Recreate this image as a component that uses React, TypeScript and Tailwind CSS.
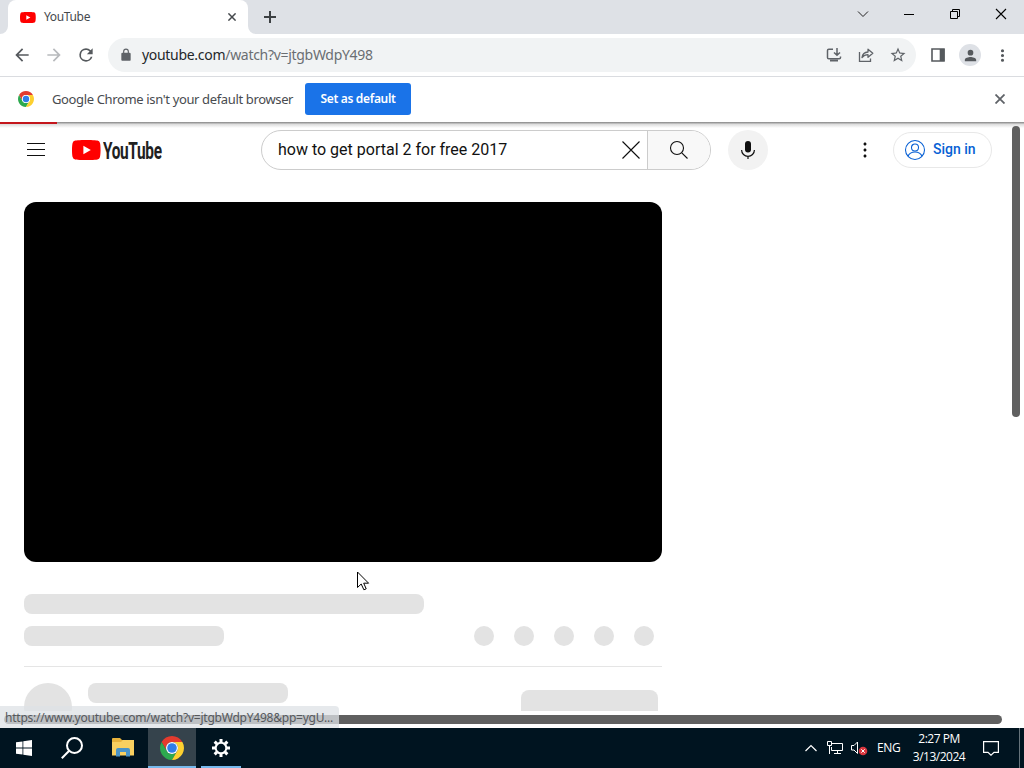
import type { ReactNode } from "react";

const TASKBAR_FONT = "font-['Open_Sans','Noto_Sans',sans-serif]";
const ACTION_DOTS = [0, 1, 2, 3, 4];

function ChromeLogo({ className }: { className: string }) {
  return (
    <svg viewBox="0 0 24 24" className={className}>
      <path fill="#e33b2e" d="M12 6H22.39A12 12 0 0 0 1.61 6L6.8 15A6 6 0 0 1 12 6Z" />
      <path fill="#2da94f" d="M6.8 15L1.61 6A12 12 0 0 0 12 24L17.2 15A6 6 0 0 1 6.8 15Z" />
      <path fill="#fdd030" d="M17.2 15L12 24A12 12 0 0 0 22.39 6H12A6 6 0 0 1 17.2 15Z" />
      <circle cx="12" cy="12" r="6" fill="#fff" />
      <circle cx="12" cy="12" r="4.8" fill="#2f7de9" />
    </svg>
  );
}

function PlayBadge({ className }: { className: string }) {
  return (
    <svg viewBox="0 0 29 20" className={className}>
      <path
        fill="#f00"
        d="M28 3.1A3.6 3.6 0 0 0 25.400 .6C23.200 0 14.300 0 14.300 0S5.400 0 3.200 .6A3.600 3.600 0 0 0 .6 3.100C0 5.400 0 10 0 10s0 4.600 .6 6.900A3.600 3.600 0 0 0 3.200 19.400C5.400 20 14.300 20 14.300 20s8.900 0 11.100-.6A3.600 3.600 0 0 0 28 16.900C28.600 14.600 28.600 10 28.600 10s0-4.600-.6-6.900Z"
      />
      <path fill="#fff" d="M11.400 14.300 18.800 10 11.400 5.700Z" />
    </svg>
  );
}

// Material glyph on the usual 24px grid
function Glyph({ d, className }: { d: string; className: string }) {
  return (
    <svg viewBox="0 0 24 24" fill="currentColor" className={`shrink-0 ${className}`}>
      <path d={d} />
    </svg>
  );
}

function TabStrip() {
  return (
    <div className="flex h-[34px] bg-[#dee1e6] pl-2">
      <div className="relative flex h-[34px] w-60 items-center rounded-t-lg bg-white pl-3">
        <svg viewBox="0 0 8 8" className="absolute -left-2 bottom-0 size-2">
          <path d="M8 0V8H0A8 8 0 0 0 8 0Z" fill="#fff" />
        </svg>
        <svg viewBox="0 0 8 8" className="absolute -right-2 bottom-0 size-2">
          <path d="M0 0V8H8A8 8 0 0 1 0 0Z" fill="#fff" />
        </svg>
        <PlayBadge className="h-[11px] w-4" />
        <span className="ml-2 text-[12px] leading-4 tracking-[-0.35px] text-[#45494d]">YouTube</span>
        <svg viewBox="0 0 8 8" className="ml-auto mr-3 size-2" stroke="#45494d" strokeWidth="1.5">
          <path d="M.4 .4 7.600 7.600M7.600 .4 .4 7.600" />
        </svg>
      </div>
      <svg viewBox="0 0 12 12" className="ml-4 mt-[11px] size-3" stroke="#3c4043" strokeWidth="2">
        <path d="M6 0V12M0 6H12" />
      </svg>
      <div className="ml-auto flex h-7 items-center pr-[17px]">
        <svg viewBox="0 0 12 12" className="mr-[34px] size-3" fill="none" stroke="#222">
          <path d="M1 3.500 6 8.500 11 3.500" />
        </svg>
        <svg viewBox="0 0 12 12" className="mr-[34px] size-3" stroke="#000">
          <path d="M1 6.500H11" />
        </svg>
        <svg viewBox="0 0 12 12" className="mr-[34px] size-3" fill="none" stroke="#000">
          <path d="M1.500 3.500H8.500V10.500H1.500ZM3.500 3.500V1.500H10.500V8.500H8.500" />
        </svg>
        <svg viewBox="0 0 12 12" className="size-3" stroke="#000" strokeWidth="1.100">
          <path d="M1 1 11 11M11 1 1 11" />
        </svg>
      </div>
    </div>
  );
}

function Toolbar() {
  return (
    <div className="flex h-[43px] items-center border-b border-[#dadce0] bg-white pl-3 text-[#5f6368]">
      <Glyph className="size-5 text-[#55595d]" d="M20 11H7.830l5.590-5.590L12 4l-8 8 8 8 1.410-1.410L7.830 13H20v-2z" />
      <Glyph className="ml-3 size-5 text-[#b8babd]" d="M12 4l-1.410 1.410L16.170 11H4v2h12.170l-5.580 5.590L12 20l8-8z" />
      <Glyph
        className="ml-3 size-5 text-[#55595d]"
        d="M17.650 6.350A7.958 7.958 0 0 0 12 4a8 8 0 1 0 7.730 10h-2.080A6 6 0 1 1 12 6c1.660 0 3.140.69 4.220 1.780L13 11h7V4l-2.350 2.350z"
      />
      <div className="ml-3 flex h-[34px] w-[808px] items-center rounded-full bg-[#f1f3f4] pl-[11px]">
        <Glyph
          className="size-[14px]"
          d="M18 8h-1V6A5 5 0 0 0 7 6v2H6a2 2 0 0 0-2 2v10c0 1.100.9 2 2 2h12a2 2 0 0 0 2-2V10a2 2 0 0 0-2-2zM9 6a3 3 0 0 1 6 0v2H9V6z"
        />
        <span className="ml-[9px] text-[14px] leading-5 tracking-[-0.3px] text-[#6a6e72]">
          <span className="text-[#24272a]">youtube.com</span>/watch?v=jtgbWdpY498
        </span>
        <svg viewBox="0 0 16 16" className="ml-auto size-4" fill="none" stroke="currentColor" strokeWidth="1.500">
          <path d="M7 2.300H2.800Q1.500 2.300 1.500 3.600V10.500Q1.500 11.800 2.800 11.800H13.200Q14.500 11.800 14.500 10.500V9.500M11 1V8M8 5.500 11 8.300 14 5.500" />
          <path d="M4 13.500H12" strokeWidth="2" />
        </svg>
        <svg viewBox="0 0 16 16" className="ml-4 size-4" fill="none" stroke="currentColor" strokeWidth="1.300">
          <path d="M1.500 5V14.300H12.500V11.500" />
          <path d="M4 10.500C4.500 7 6.500 5.200 10 5V2.200L14.800 6.300 10 10.300V7.700C7.200 7.700 5.500 8.600 4 10.500Z" strokeLinejoin="round" />
        </svg>
        <Glyph
          className="ml-[15px] mr-[9px] size-[18px]"
          d="M22 9.240l-7.190-.62L12 2 9.190 8.630 2 9.240l5.460 4.730L5.820 21 12 17.270 18.180 21l-1.630-7.030L22 9.240zM12 15.400l-3.760 2.270 1-4.280-3.320-2.880 4.380-.38L12 6.100l1.710 4.040 4.380.38-3.320 2.880 1 4.280L12 15.400z"
        />
      </div>
      <svg viewBox="0 0 14 14" className="ml-[15px] size-3.5">
        <path d="M1 1H13V13H1Z" fill="none" stroke="#55595d" strokeWidth="1.600" />
        <path d="M8.700 1H13.500V13H8.700Z" fill="#55595d" />
      </svg>
      <div className="ml-3.5 flex size-[22px] items-center justify-center rounded-full bg-[#dee1e6]">
        <Glyph
          className="size-[17px] text-[#55595d]"
          d="M12 12a4 4 0 1 0 0-8 4 4 0 0 0 0 8zm0 2c-2.670 0-8 1.340-8 4v2h16v-2c0-2.660-5.330-4-8-4z"
        />
      </div>
      <Glyph
        className="ml-3 size-[19px] text-[#55595d]"
        d="M12 8a2 2 0 1 0 0-4 2 2 0 0 0 0 4zm0 2a2 2 0 1 0 0 4 2 2 0 0 0 0-4zm0 6a2 2 0 1 0 0 4 2 2 0 0 0 0-4z"
      />
    </div>
  );
}

function DefaultBrowserBar() {
  return (
    <div className="flex h-[45px] items-center bg-white pb-0.5 pl-[18px] pr-[19px]">
      <ChromeLogo className="size-4" />
      <span className="ml-[18px] w-[253px] whitespace-nowrap text-[13px] leading-5 tracking-[-0.36px] text-[#484b4f]">
        Google Chrome isn't your default browser
      </span>
      <button className="h-8 w-[106px] rounded-[3px] bg-[#1a73e8] text-[12px] font-semibold tracking-[-0.32px] text-white">
        Set as default
      </button>
      <svg viewBox="0 0 10 10" className="ml-auto size-2.5" stroke="#5f6368" strokeWidth="1.800">
        <path d="M.5 .5 9.500 9.500M9.500 .5 .5 9.500" />
      </svg>
    </div>
  );
}

function Masthead() {
  return (
    <header className="flex h-14 shrink-0 items-center pl-[27px] font-['Roboto',sans-serif]">
      <svg viewBox="0 0 18 14" className="mb-0.5 h-3.5 w-[18px]" stroke="#0f0f0f">
        <path d="M0 1.500H18M0 7.500H18M0 13.500H18" />
      </svg>
      <PlayBadge className="ml-[27px] h-5 w-[29px]" />
      <span className="ml-[2px] mt-px w-[60px] origin-left scale-x-[0.655] whitespace-nowrap text-[23.5px] font-bold leading-6 tracking-[-0.5px] text-[#212121]">
        YouTube
      </span>
      <div className="ml-[98px] flex h-10 w-[450px] overflow-hidden rounded-full border border-[#ccc]">
        <div className="flex flex-1 items-center pl-4 pr-[7px]">
          <span className="text-[16px] leading-6 text-[#111]">how to get portal 2 for free 2017</span>
          <svg viewBox="0 0 18 18" className="ml-auto size-[18px]" stroke="#0f0f0f" strokeWidth="1.100">
            <path d="M.5 .5 17.500 17.500M17.500 .5 .5 17.500" />
          </svg>
        </div>
        <div className="flex w-[63px] items-center justify-center border-l border-[#ccc] bg-[#f8f8f8]">
          <svg viewBox="0 0 24 24" className="size-6" fill="none" stroke="#0f0f0f" strokeWidth="1.100">
            <circle cx="10" cy="10" r="6.500" />
            <path d="M14.800 14.800 20.500 20.500" />
          </svg>
        </div>
      </div>
      <div className="ml-[17px] flex size-10 items-center justify-center rounded-full bg-[#f2f2f2]">
        <svg viewBox="0 0 24 24" className="size-6" fill="none" stroke="#0f0f0f">
          <rect x="9" y="3" width="6" height="11.500" rx="3" fill="#0f0f0f" stroke="none" />
          <path d="M5.600 12A6.400 6.400 0 0 0 18.400 12M12 18.500V21" strokeWidth="1.200" />
        </svg>
      </div>
      <Glyph
        className="ml-[85px] size-6 text-[#0f0f0f]"
        d="M12 16.500c.83 0 1.500.67 1.500 1.500s-.67 1.500-1.500 1.500-1.500-.67-1.500-1.500.67-1.500 1.500-1.500zM10.500 12c0 .83.67 1.500 1.500 1.500s1.500-.67 1.500-1.500-.67-1.500-1.500-1.500-1.500.67-1.500 1.500zm0-6c0 .83.67 1.500 1.500 1.500s1.500-.67 1.500-1.500-.67-1.500-1.500-1.500-1.500.67-1.500 1.500z"
      />
      <div className="ml-4 flex h-9 w-[99px] items-center rounded-full border border-[#e8e8e8] pl-[9px]">
        <svg viewBox="0 0 24 24" className="size-6" fill="none" stroke="#065fd4" strokeWidth="1.050">
          <circle cx="12" cy="12" r="9.500" />
          <circle cx="12" cy="9.500" r="3.500" />
          <path d="M5 18.300C6.300 15 8.500 14 12 14S17.700 15 19 18.300" />
        </svg>
        <span className="mb-0.5 ml-1.5 whitespace-nowrap text-[14px] font-medium leading-5 text-[#065fd4]">Sign in</span>
      </div>
    </header>
  );
}

function WatchSkeleton() {
  return (
    <main className="w-[662px] pl-6 pt-6">
      <div className="h-[360px] rounded-xl bg-black" />
      <div className="mt-8 h-5 w-[400px] rounded-lg bg-[#e3e3e3]" />
      <div className="mt-3 flex items-center justify-between pr-2">
        <div className="h-5 w-[200px] rounded-lg bg-[#e3e3e3]" />
        <div className="flex gap-5">
          {ACTION_DOTS.map((i) => (
            <div key={i} className="size-5 rounded-full bg-[#e3e3e3]" />
          ))}
        </div>
      </div>
      <div className="mt-5 flex border-t border-[#e5e5e5] pr-1 pt-4">
        <div className="size-12 rounded-full bg-[#e3e3e3]" />
        <div className="ml-4 h-5 w-[200px] rounded-lg bg-[#e3e3e3]" />
        <div className="ml-auto mt-[7px] h-9 w-[137px] rounded-lg bg-[#e3e3e3]" />
      </div>
    </main>
  );
}

function TaskItem({ state, children }: { state: string; children: ReactNode }) {
  return <div className={`flex h-10 items-center justify-center ${state}`}>{children}</div>;
}

function Taskbar() {
  return (
    <footer className={`flex h-10 items-center bg-[#001420] text-white ${TASKBAR_FONT}`}>
      <TaskItem state="w-12">
        <svg viewBox="0 0 16 16" className="size-4" fill="#fff">
          <path d="M0 2.300 6.500 1.400V7.600H0ZM7.300 1.300 16 0V7.600H7.300ZM0 8.400H6.500V14.600L0 13.700ZM7.300 8.400H16V16L7.300 14.700Z" />
        </svg>
      </TaskItem>
      <TaskItem state="w-12">
        <svg viewBox="0 0 22 22" className="size-[22px]" fill="none" stroke="#fff" strokeWidth="2">
          <circle cx="13.500" cy="8.500" r="7.500" />
          <path d="M8.200 13.800 .8 21.200" />
        </svg>
      </TaskItem>
      <TaskItem state="w-[52px] pl-0.5">
        <svg viewBox="0 0 22 19" className="mb-px h-[19px] w-[22px]">
          <path fill="#e8b33c" d="M0 1Q0 0 1 0H8L10 2H21V5H0Z" />
          <path fill="#f9d060" d="M0 4H9L11 2H22V17.500H0Z" />
          <path fill="#4a94c8" d="M4 18.500V12Q4 10 6 10H16Q18 10 18 12V18.500H14V14H8V18.500Z" />
        </svg>
      </TaskItem>
      <TaskItem state="w-12 border-b-2 border-[#76b9ed] bg-[#35434c] pt-px">
        <ChromeLogo className="size-6" />
      </TaskItem>
      <TaskItem state="ml-[5px] w-10 border-b-2 border-[#76b9ed] pt-px">
        <svg viewBox="0 0 18 18" className="size-[18px]" fill="none" stroke="#fff">
          <circle cx="9" cy="9" r="5.300" strokeWidth="2" />
          <path
            strokeWidth="3"
            d="M9 0V3.200M9 14.800V18M0 9H3.200M14.800 9H18M2.640 2.640 4.900 4.900M13.100 13.100 15.360 15.360M2.640 15.360 4.900 13.100M13.100 4.900 15.360 2.640"
          />
        </svg>
      </TaskItem>
      <div className="ml-auto flex h-10 items-center">
        <svg viewBox="0 0 12 8" className="mr-2.5 h-2 w-3" fill="none" stroke="#fff" strokeWidth="1.200">
          <path d="M.5 7 6 1.500 11.500 7" />
        </svg>
        <svg viewBox="0 0 17 14" className="mr-[7px] h-3.5 w-[17px]" fill="none" stroke="#fff">
          <path d="M5 2.500H15.500V9.500H4.500V6M10.500 9.500V12.500M7 12.500H14M.5 .5H4.500V4.500H.5ZM2.500 4.500V13" />
        </svg>
        <svg viewBox="0 0 18 16" className="mr-2 h-4 w-[18px]" fill="none" stroke="#fff">
          <path d="M.5 5.500H3L6.500 2V13.500L3 10H.5Z" />
          <circle cx="12" cy="11" r="4.300" fill="#d9363e" stroke="none" />
          <path d="M10.300 9.300 13.700 12.700M13.700 9.300 10.300 12.700" />
        </svg>
        <span className="w-[23px] whitespace-nowrap text-[12px] tracking-[-0.4px]">ENG</span>
        <div className="ml-2 w-[62px] whitespace-nowrap text-center text-[12px] leading-[18px] tracking-[-0.5px]">
          <div>2:27 PM</div>
          <div>3/13/2024</div>
        </div>
        <svg viewBox="0 0 16 16" className="ml-[13px] size-4" fill="none" stroke="#fff" strokeWidth="1.200">
          <path d="M.6 1.600H15.400V12.400H11L8 15.200 5 12.400H.6Z" />
        </svg>
        <div className="ml-5 h-10 w-[5px] border-l border-[#66737b]" />
      </div>
    </footer>
  );
}

export default function App() {
  return (
    <div className="flex h-[768px] w-[1024px] flex-col overflow-hidden bg-white font-['Noto_Sans','Open_Sans',sans-serif]">
      <TabStrip />
      <Toolbar />
      <DefaultBrowserBar />
      <div className="relative h-[606px] bg-white">
        <div className="flex h-[589px] flex-col overflow-hidden">
          <Masthead />
          <WatchSkeleton />
        </div>

        {/* infobar shadow and page load progress */}
        <div className="absolute inset-x-0 top-0 h-1.5 bg-gradient-to-b from-[#858585] via-[#dedede] via-40% to-transparent" />
        <div className="absolute left-0 top-0 h-0.5 w-[57px] bg-[#c4161c]" />

        {/* overlay scrollbars */}
        <div className="absolute left-[1012px] top-1 h-[291px] w-2 rounded-full bg-[#606060]" />
        <div className="absolute left-1 top-[593px] h-[9px] w-[998px] rounded-full bg-[#606060]" />

        {/* hovered link */}
        <div className="absolute bottom-0 left-0 h-[22px] w-[339px] whitespace-nowrap rounded-tr bg-[#dee1e6]/75 pl-[5px] text-[12px] leading-[23px] tracking-[-0.23px] text-[#55585c]">
          https://www.youtube.com/watch?v=jtgbWdpY498&amp;pp=ygU...
        </div>

        <svg viewBox="0 0 13 20" className="absolute left-[357px] top-[449px] h-5 w-[13px]" fill="#fff" stroke="#000">
          <path d="M.5 1V16.500L4.200 13 6.900 18.800 9.200 17.800 6.700 12.200H11.600Z" />
        </svg>
      </div>
      <Taskbar />
    </div>
  );
}
